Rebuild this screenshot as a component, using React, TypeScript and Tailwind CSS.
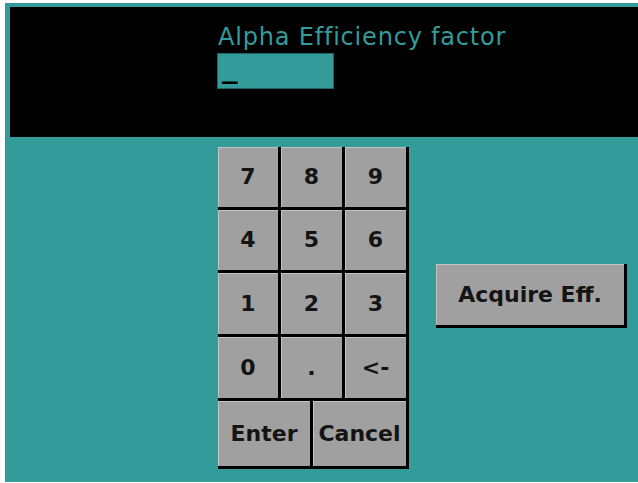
import React from 'react';

const FONT = "font-['DejaVu_Sans',sans-serif]";

interface KeyProps {
  label: string;
  className: string;
}

function Key({ label, className }: KeyProps) {
  return (
    <div
      className={`${className} flex items-center justify-center bg-[#a0a0a0] border-r-[3px] border-b-[3px] border-black shadow-[inset_1px_1px_0_#c4c4c4] text-[22px] font-bold text-[#141414] leading-none select-none`}
    >
      {label}
    </div>
  );
}

export default function App() {
  const rows = [
    ['7', '8', '9'],
    ['4', '5', '6'],
    ['1', '2', '3'],
    ['0', '.', '<-'],
  ];
  const rowHeights = ['h-[63px]', 'h-[63px]', 'h-[64px]', 'h-[64px]'];
  const colWidths = ['w-[63px]', 'w-[64px]', 'w-[64px]'];

  return (
    <div className={`w-[638px] h-[483px] bg-white pl-[5px] pt-[3px] pb-[1px] ${FONT}`}>
      <div className="h-full bg-[#339c9b] pl-[5px] pt-[4px] flex flex-col">
        {/* Prompt panel */}
        <div className="h-[130px] bg-black pl-[207px] pt-[18px] flex flex-col items-start">
          <div className="ml-[1px] text-[24px] leading-none tracking-[0.8px] text-[#339c9b]">
            Alpha Efficiency factor
          </div>
          <div className="mt-[4px] w-[117px] h-[36px] bg-[#339c9b] border border-[#1d6665] flex items-end pl-[4px] pb-[9px]">
            <span className="font-['DejaVu_Sans_Mono',monospace] font-bold text-[26px] leading-[20px] text-black">_</span>
          </div>
        </div>

        {/* Keypad + action */}
        <div className="flex items-start mt-[10px] pl-[208px]">
          <div className="flex flex-col w-[191px]">
            {rows.map((row, r) => (
              <div key={r} className={`flex ${rowHeights[r]}`}>
                {row.map((k, c) => (
                  <Key key={k} label={k} className={`${colWidths[c]} h-full`} />
                ))}
              </div>
            ))}
            <div className="flex h-[68px]">
              <Key label="Enter" className="w-[95px] h-full" />
              <Key label="Cancel" className="w-[96px] h-full" />
            </div>
          </div>

          <div className="ml-[27px] mt-[117px]">
            <Key label="Acquire Eff." className="w-[191px] h-[64px]" />
          </div>
        </div>
      </div>
    </div>
  );
}
